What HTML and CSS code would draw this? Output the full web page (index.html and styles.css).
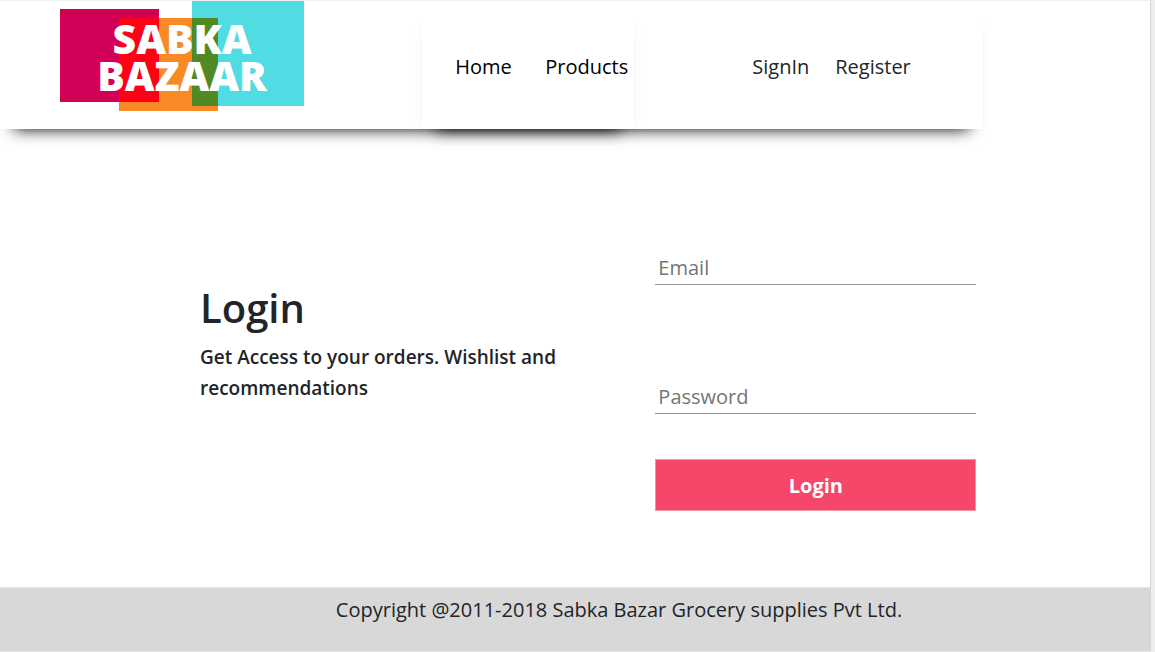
FILE: index.html
```html
<!DOCTYPE html>
<html lang="en">
<head>
<meta charset="utf-8">
<title>Sabka Bazaar - Login</title>
<link rel="stylesheet" href="styles.css">
</head>
<body>
<div class="page">
  <header class="header">
    <a class="logo" href="#" aria-label="Sabka Bazaar">
      <svg width="244" height="111" viewBox="0 0 244 111">
        <rect x="0" y="8" width="99" height="93" fill="#d10056"/>
        <rect x="59" y="17" width="99" height="93" fill="#f78a25"/>
        <rect x="59" y="17" width="40" height="84" fill="#ff0016"/>
        <rect x="132" y="0" width="112" height="105" fill="#51dce3"/>
        <rect x="132" y="17" width="26" height="88" fill="#518a24"/>
        <text class="logo-text" x="122" y="53" text-anchor="middle">SABKA</text>
        <text class="logo-text" x="122" y="90" text-anchor="middle">BAZAAR</text>
      </svg>
    </a>
    <nav class="nav">
      <a href="#">Home</a>
      <a href="#">Products</a>
    </nav>
    <div class="account">
      <a href="#">SignIn</a>
      <a href="#">Register</a>
    </div>
  </header>
  <main class="main">
    <section class="intro">
      <h1>Login</h1>
      <p>Get Access to your orders. Wishlist and recommendations</p>
    </section>
    <form class="form">
      <input class="field" type="email" placeholder="Email" aria-label="Email">
      <input class="field" type="password" placeholder="Password" aria-label="Password">
      <button class="submit" type="submit">Login</button>
    </form>
  </main>
  <footer class="footer">Copyright @2011-2018 Sabka Bazar Grocery supplies Pvt Ltd.</footer>
</div>
</body>
</html>
```
FILE: styles.css
```css
* { box-sizing: border-box; }

body {
  margin: 0;
  background: #ededed;
  color: #212529;
  font-family: "Open Sans", "Noto Sans", sans-serif;
  font-size: 20px;
  line-height: 30px;
}

a { color: inherit; text-decoration: none; }

.page {
  display: flex;
  flex-direction: column;
  min-height: 100vh;
  margin-right: 4px;
  border-top: 1px solid #f0f0f0;
  border-right: 1px solid #d6d6d6;
  border-bottom: 1px solid #e6e6e6;
  background: #fff;
}

.header {
  display: flex;
  width: 85.5%;
  height: 128px;
  background: #fff;
  box-shadow: 0 14px 15px -14px #000;
}

.logo { flex: 1; padding-left: 60px; }
.logo svg { display: block; }

.logo-text {
  fill: #fff;
  font-family: "Open Sans", sans-serif;
  font-size: 41px;
  font-weight: 800;
}

.nav {
  display: flex;
  align-items: center;
  justify-content: space-between;
  width: 212px;
  padding: 4px 6px 0 33px;
  background: #fff;
  box-shadow: 0 14px 15px -14px #000;
  color: #000;
}

.account {
  display: flex;
  align-items: center;
  gap: 26px;
  width: 349px;
  padding: 4px 0 0 118px;
}

.main {
  display: grid;
  grid-template-columns: 390px 321px;
  justify-content: space-between;
  flex: 1;
  width: 84.9%;
  padding: 122px 0 76px 200px;
}

.intro { padding-top: 33px; }

.intro h1 {
  margin: 0 0 10px;
  font-size: 40px;
  font-weight: 600;
  line-height: 48px;
}

.intro p { margin: 0; font-size: 19px; font-weight: 600; line-height: 31px; }

.form { display: flex; flex-direction: column; }

.field {
  width: 100%;
  height: 34px;
  margin-bottom: 95px;
  padding: 0 3px;
  border: 0;
  border-bottom: 1px solid #949494;
  background: transparent;
  color: #212529;
  font: inherit;
}

.field + .field { margin-bottom: 45px; }
.field::placeholder { color: #757575; opacity: 1; }

.submit {
  height: 52px;
  padding-top: 2px;
  border: 1px solid #f890a5;
  background: #f5476a;
  color: #fff;
  font: inherit;
  font-weight: 700;
}

.footer {
  height: 64px;
  padding: 7px 0 0 88px;
  border-top: 1px solid #e6e6e6;
  background: #d8d8d8;
  text-align: center;
}
```
